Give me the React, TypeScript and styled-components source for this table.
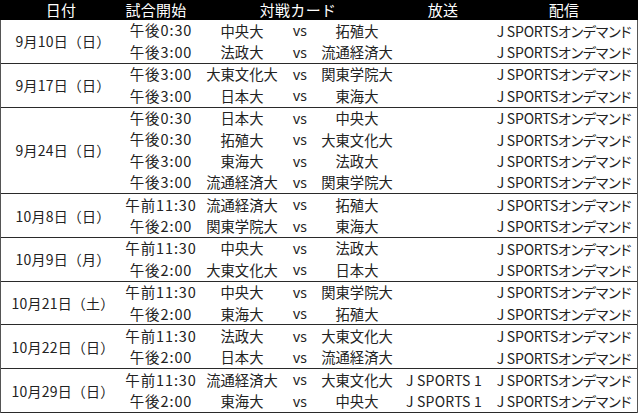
import React from "react";
import styled, { createGlobalStyle } from "styled-components";

const Global = createGlobalStyle`
  html, body { margin: 0; padding: 0; background: #fff; }
  body { font-family: "Noto Sans CJK JP", "Noto Sans", sans-serif; color: #222; }
`;

const COLS = "120px 80px 82px 34px 80px 94px 1fr";
const ROW_H = 21.4;

const Table = styled.div`
  width: 638px;
  box-sizing: border-box;
  border-left: 1px solid #555;
  border-right: 1px solid #555;
  font-size: 14px;
`;

const HeaderRow = styled.div`
  display: grid;
  grid-template-columns: ${COLS};
  height: 20px;
  background: #000;
  color: #fff;
  font-size: 15px;
  align-items: center;
  margin: 0 -1px;
`;

const HeadCell = styled.div<{ $span?: number; $shift?: number }>`
  grid-column: span ${(p) => p.$span ?? 1};
  text-align: center;
  line-height: 20px;
  letter-spacing: 0.3px;
  transform: translateX(${(p) => p.$shift ?? 0}px);
`;

const Group = styled.div<{ $rows: number }>`
  display: grid;
  grid-template-columns: ${COLS};
  grid-template-rows: repeat(${(p) => p.$rows}, ${ROW_H}px);
  border-bottom: 1.5px solid #2a2a2a;
`;

const DateCell = styled.div<{ $rows: number }>`
  grid-row: span ${(p) => p.$rows};
  display: flex;
  align-items: center;
  justify-content: center;
  font-size: 14px;
  padding-left: 4px;
  letter-spacing: 0.2px;
`;

const Cell = styled.div`
  display: flex;
  align-items: center;
  justify-content: center;
  white-space: nowrap;
  line-height: 1;
`;

const Time = styled(Cell)`
  font-size: 14.5px;
  letter-spacing: 0.9px;
`;

const Team = styled(Cell)`
  font-size: 14.3px;
`;

const Vs = styled(Cell)`
  font-size: 14px;
  font-family: "Noto Sans", sans-serif;
  padding-top: 1px;
`;

const Broadcast = styled(Cell)`
  letter-spacing: 0.2px;
`;

const Stream = styled(Cell)`
  font-feature-settings: "palt";
  letter-spacing: -0.2px;
`;

type Match = [string, string, string, string];
type Day = { date: string; matches: Match[] };

const data: Day[] = [
  { date: "9月10日（日）", matches: [["午後0:30", "中央大", "拓殖大", ""], ["午後3:00", "法政大", "流通経済大", ""]] },
  { date: "9月17日（日）", matches: [["午後3:00", "大東文化大", "関東学院大", ""], ["午後3:00", "日本大", "東海大", ""]] },
  {
    date: "9月24日（日）",
    matches: [
      ["午後0:30", "日本大", "中央大", ""],
      ["午後0:30", "拓殖大", "大東文化大", ""],
      ["午後3:00", "東海大", "法政大", ""],
      ["午後3:00", "流通経済大", "関東学院大", ""],
    ],
  },
  { date: "10月8日（日）", matches: [["午前11:30", "流通経済大", "拓殖大", ""], ["午後2:00", "関東学院大", "東海大", ""]] },
  { date: "10月9日（月）", matches: [["午前11:30", "中央大", "法政大", ""], ["午後2:00", "大東文化大", "日本大", ""]] },
  { date: "10月21日（土）", matches: [["午前11:30", "中央大", "関東学院大", ""], ["午後2:00", "東海大", "拓殖大", ""]] },
  { date: "10月22日（日）", matches: [["午前11:30", "法政大", "大東文化大", ""], ["午後2:00", "日本大", "流通経済大", ""]] },
  {
    date: "10月29日（日）",
    matches: [
      ["午前11:30", "流通経済大", "大東文化大", "J SPORTS 1"],
      ["午後2:00", "東海大", "中央大", "J SPORTS 1"],
    ],
  },
];

export default function App() {
  return (
    <>
      <Global />
      <Table>
        <HeaderRow>
          <HeadCell $shift={1}>日付</HeadCell>
          <HeadCell $shift={-4}>試合開始</HeadCell>
          <HeadCell $span={3}>対戦カード</HeadCell>
          <HeadCell>放送</HeadCell>
          <HeadCell>配信</HeadCell>
        </HeaderRow>
        {data.map((d) => (
          <Group key={d.date} $rows={d.matches.length}>
            <DateCell $rows={d.matches.length}>{d.date}</DateCell>
            {d.matches.map((m, i) => (
              <React.Fragment key={i}>
                <Time>{m[0]}</Time>
                <Team>{m[1]}</Team>
                <Vs>vs</Vs>
                <Team>{m[2]}</Team>
                <Broadcast>{m[3]}</Broadcast>
                <Stream>J SPORTSオンデマンド</Stream>
              </React.Fragment>
            ))}
          </Group>
        ))}
      </Table>
    </>
  );
}
